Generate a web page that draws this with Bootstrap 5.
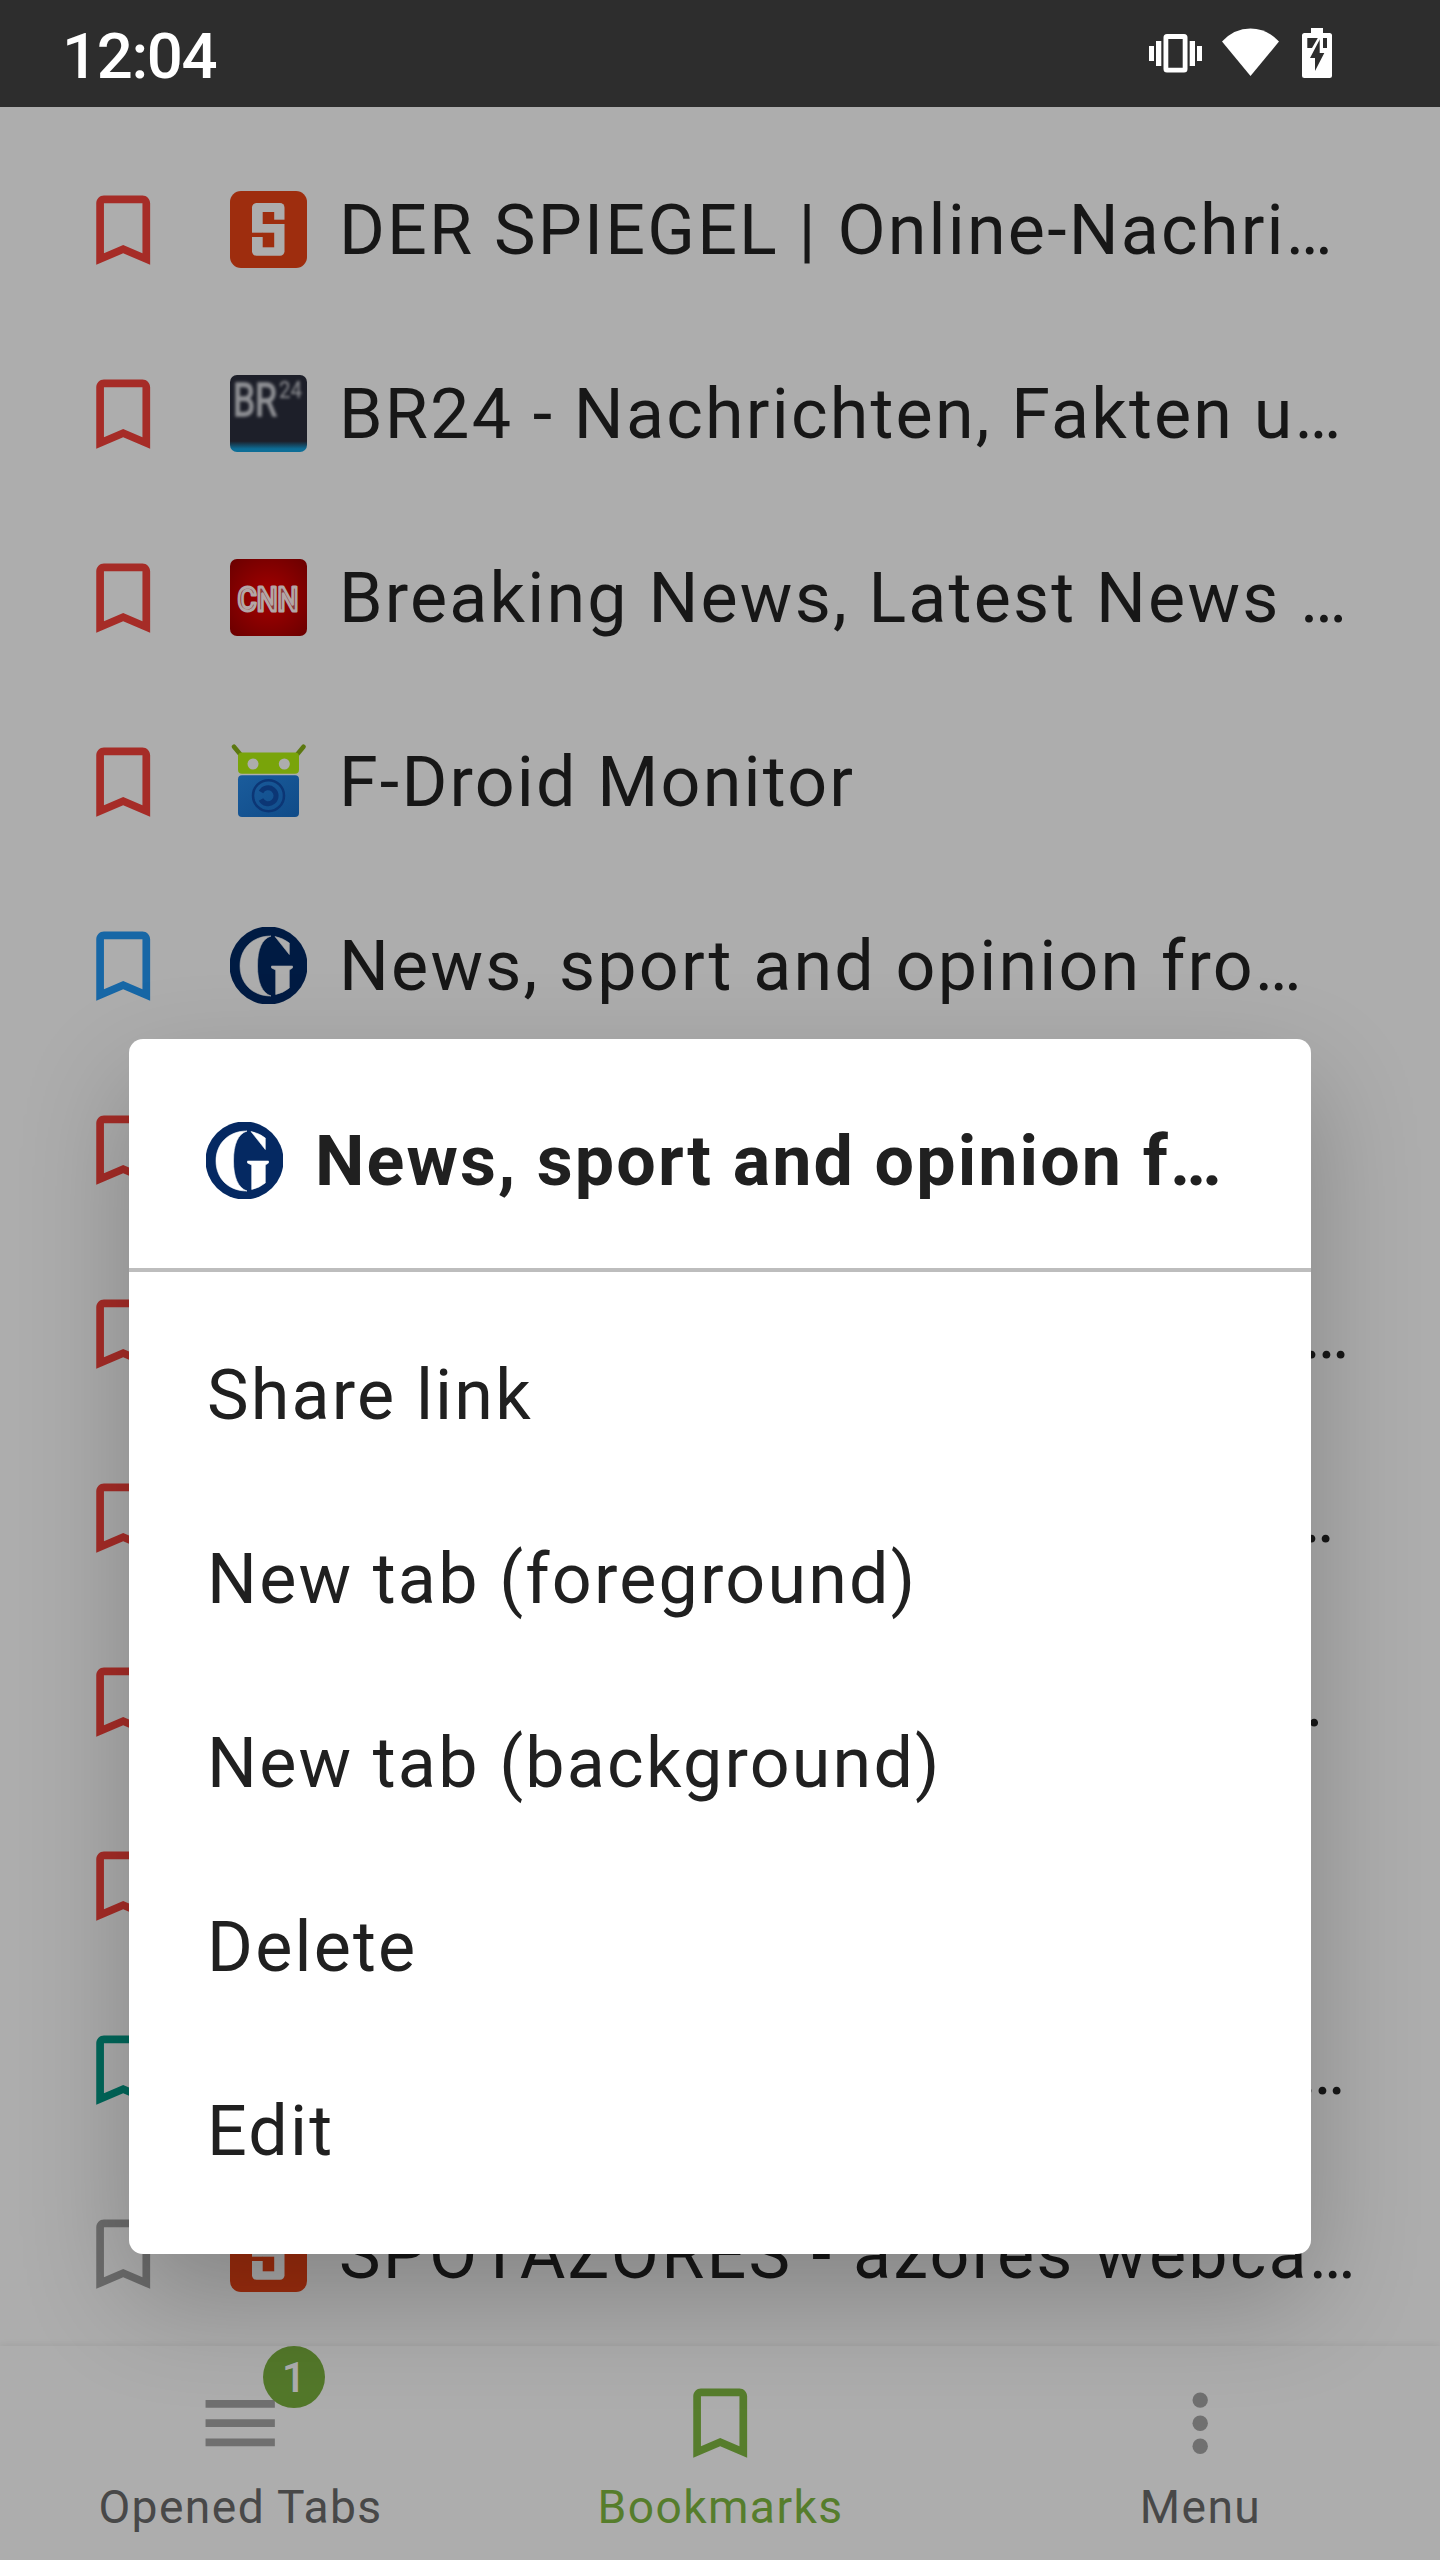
<!DOCTYPE html>
<html lang="de">
<head>
<meta charset="utf-8">
<meta name="viewport" content="width=device-width, initial-scale=1">
<title>Bookmarks</title>
<link href="https://cdn.jsdelivr.net/npm/bootstrap@5.3.0/dist/css/bootstrap.min.css" rel="stylesheet">
<style>
  body { font-family: Roboto, "Liberation Sans", sans-serif; background: #adadad; }
  .screen { width: 1440px; height: 2560px; }
  .statusbar { height: 107px; background: #2d2d2d; padding: 0 108px 0 62px; flex: none; }
  .clock { font-size: 63.5px; font-weight: 500; line-height: 107px; letter-spacing: -1.4px; padding-top: 3px; height: 107px; }
  .status-icons { margin-top: 20px; }
  .marks { padding-top: 30.5px; height: 2239px; flex: none; }
  .mark-row { height: 184px; padding: 0 77px; }
  .glyph { width: 92.4px; height: 92.4px; flex: none; fill: currentColor; }
  .mark-row .glyph { margin-top: 1.6px; }
  .fav { width: 77px; height: 77px; flex: none; overflow: visible; }
  .mark-row .fav { margin-left: 60.6px; }
  .entry { font-size: 70px; line-height: 92px; letter-spacing: 2.19px; color: #171717; white-space: nowrap; }
  .mark-row .entry { margin-left: 32px; }
  .red { color: #a62c27; } .blue { color: #1767a6; } .teal { color: #00685b; } .gray { color: #6c6c6c; }
  .bottomnav { height: 214px; flex: none; background: #adadad; color: #707070; box-shadow: 0 -1px 7px rgba(0,0,0,.07); }
  .bottomnav .glyph { margin-top: 31px; }
  .tab-label { font-size: 46.2px; line-height: 60px; letter-spacing: 1.4px; margin-top: 7.500px; padding-left: 1px; color: #484848; }
  .green, .green .tab-label { color: #567d2c; }
  .count { left: 263px; top: 0; width: 62px; height: 62px; background: #53782a; color: #adadad; font-size: 43px; font-weight: 500; line-height: 62px; }
  .sheet { left: 129px; top: 1039px; width: 1182px; height: 1215px; border-radius: 14px; box-shadow: 0 45px 110px rgba(0,0,0,.23); }
  .sheet-head { height: 233px; padding: 14px 77px 0; border-bottom: 4px solid #bdbdbd; }
  .sheet-head .entry { font-weight: 700; margin-left: 32px; letter-spacing: 2.100px; color: #202020; }
  .sheet-body { padding: 30.5px 77px 0 78px; }
  .sheet-body .entry { height: 184px; color: #202020; }
</style>
</head>
<body>
<svg width="0" height="0" class="position-absolute">
  <defs>
    <symbol id="mark-icon" viewBox="0 0 24 24"><path d="M17 3H7C5.900 3 5 3.900 5 5V21L12 18L19 21V5C19 3.900 18.100 3 17 3ZM17 18L12 15.820L7 18V5H17Z"/></symbol>
    <symbol id="spiegel" viewBox="0 0 77 77">
      <rect width="77" height="77" rx="11" fill="#9e2d0e"/>
      <rect x="22" y="12" width="32.500" height="52.700" rx="4.500" fill="#adadad"/>
      <g fill="#9e2d0e"><rect x="32.700" y="21" width="11.500" height="12"/><rect x="44" y="28.700" width="11" height="4.300"/><rect x="32.700" y="41.700" width="11.500" height="14.600"/><rect x="21.500" y="41.700" width="11.500" height="4.300"/></g>
    </symbol>
    <symbol id="guardian" viewBox="0 0 77 77">
      <circle cx="38.500" cy="38.500" r="39" fill="var(--disc)"/>
      <g fill="var(--paper)" stroke="var(--paper)" stroke-width=".6">
        <path d="M41 9C22 9 10 22 10 39C10 56 22 69 41 69C32 66 27.500 55 27.500 39C27.500 22 32 12 41 9Z"/>
        <path d="M45 9.500Q53 11 59.300 16V27.500Z"/>
        <path d="M41.500 39H62.500V41L59.300 43V61Q53 66 45.700 67.500V43L41.500 41Z"/>
      </g>
    </symbol>
    <radialGradient id="cnn-bg" cx=".5" cy=".5" r=".68"><stop offset="0" stop-color="#a60000"/><stop offset="1" stop-color="#6c0000"/></radialGradient>
    <linearGradient id="br-bg" x2="0" y2="1"><stop offset=".86" stop-color="#1d1f29"/><stop offset=".96" stop-color="#0d6d96"/></linearGradient>
    <linearGradient id="fd-bg" x2="1" y2="1"><stop offset="0" stop-color="#1a5c9c"/><stop offset="1" stop-color="#104b88"/></linearGradient>
    <filter id="soft"><feGaussianBlur stdDeviation="1.500"/></filter>
  </defs>
</svg>

<div class="screen position-relative d-flex flex-column overflow-hidden">
  <header class="statusbar d-flex justify-content-between text-white">
    <div class="clock">12:04</div>
    <svg class="status-icons" width="183" height="60" viewBox="1149 20 183 60" fill="#fff">
      <path fill-rule="evenodd" d="M1167 34H1184Q1187.500 34 1187.500 37.500V69Q1187.500 72.500 1184 72.500H1167Q1163.500 72.500 1163.500 69V37.500Q1163.500 34 1167 34ZM1168.300 39V67.700H1182.700V39Z"/>
      <path d="M1149 46h5v15h-5zM1156 41h5.300v25h-5.300zM1189.700 41h5.300v25h-5.300zM1197 46h5v15h-5z"/>
      <path d="M1222 41.500Q1234 28.500 1250.500 28.500T1279 41.500L1250.500 76Z"/>
      <path fill-rule="evenodd" d="M1311 28H1323V33H1329.500Q1332 33 1332 35.500V75.500Q1332 78 1329.500 78H1304.500Q1302 78 1302 75.500V35.500Q1302 33 1304.500 33H1311ZM1307.300 38V48H1312L1317.800 38ZM1323 38V48H1327V38ZM1320 39L1310 58H1315V71L1324.300 53H1319.700V39Z"/>
    </svg>
  </header>

  <main class="marks">
    <div class="mark-row d-flex align-items-center"><svg class="glyph red"><use href="#mark-icon"/></svg><svg class="fav"><use href="#spiegel"/></svg><div class="entry">DER SPIEGEL | Online-Nachri…</div></div>
    <div class="mark-row d-flex align-items-center"><svg class="glyph red"><use href="#mark-icon"/></svg>
      <svg class="fav" viewBox="0 0 77 77"><rect width="77" height="77" rx="7" fill="url(#br-bg)"/><g fill="#8f9094" stroke="#8f9094" filter="url(#soft)" font-family="Roboto"><text x="3" y="41" font-size="47" stroke-width="1.500" textLength="44" lengthAdjust="spacingAndGlyphs">BR</text><text x="49" y="23" font-size="23" stroke="none" textLength="23" lengthAdjust="spacingAndGlyphs">24</text></g></svg>
      <div class="entry">BR24 - Nachrichten, Fakten u…</div></div>
    <div class="mark-row d-flex align-items-center"><svg class="glyph red"><use href="#mark-icon"/></svg>
      <svg class="fav" viewBox="0 0 77 77"><rect width="77" height="77" rx="7" fill="url(#cnn-bg)"/><text x="7.500" y="51.500" font-family="Roboto" font-size="34" font-weight="500" stroke-linejoin="round" fill="#8c3c3c" stroke="#b3a6a6" stroke-width="3" textLength="61" lengthAdjust="spacingAndGlyphs">CNN</text></svg>
      <div class="entry">Breaking News, Latest News …</div></div>
    <div class="mark-row d-flex align-items-center"><svg class="glyph red"><use href="#mark-icon"/></svg>
      <svg class="fav" viewBox="0 0 77 77"><path d="M4 3.700L10 11M73.500 3.700L67.500 11" stroke="#5c7810" stroke-width="4.500" stroke-linecap="round"/><rect x="8" y="9.500" width="61" height="21.200" rx="4" fill="#79a40a"/><circle cx="23" cy="21" r="5.500" fill="#adadad"/><circle cx="54.300" cy="21" r="5.500" fill="#adadad"/><rect x="8" y="32.300" width="61" height="41.700" rx="4" fill="url(#fd-bg)"/><g fill="none" stroke="#0c3675"><circle cx="38.500" cy="52.700" r="15.500" stroke-width="2.500"/><path d="M31 49A8 8 0 1 1 31 56.500" stroke-width="5"/></g></svg>
      <div class="entry">F-Droid Monitor</div></div>
    <div class="mark-row d-flex align-items-center"><svg class="glyph blue"><use href="#mark-icon"/></svg><svg class="fav" style="--disc:#001b43;--paper:#adadad"><use href="#guardian"/></svg><div class="entry">News, sport and opinion fro…</div></div>
    <div class="mark-row d-flex align-items-center"><svg class="glyph red"><use href="#mark-icon"/></svg></div>
    <div class="mark-row d-flex align-items-center justify-content-between"><svg class="glyph red"><use href="#mark-icon"/></svg><div class="entry" style="margin-right:11.5px">…</div></div>
    <div class="mark-row d-flex align-items-center justify-content-between"><svg class="glyph red"><use href="#mark-icon"/></svg><div class="entry" style="margin-right:26.5px">…</div></div>
    <div class="mark-row d-flex align-items-center justify-content-between"><svg class="glyph red"><use href="#mark-icon"/></svg><div class="entry" style="margin-right:38px">…</div></div>
    <div class="mark-row d-flex align-items-center"><svg class="glyph red"><use href="#mark-icon"/></svg></div>
    <div class="mark-row d-flex align-items-center justify-content-between"><svg class="glyph teal"><use href="#mark-icon"/></svg><div class="entry" style="margin-right:15.5px">…</div></div>
    <div class="mark-row d-flex align-items-center"><svg class="glyph gray"><use href="#mark-icon"/></svg><svg class="fav"><use href="#spiegel"/></svg><div class="entry">SPOTAZORES - azores webca…</div></div>
  </main>

  <nav class="bottomnav row g-0 text-center position-relative">
    <div class="col-4"><svg class="glyph d-block mx-auto" viewBox="0 0 24 24"><path d="M3 18h18v-2H3v2zm0-5h18v-2H3v2zm0-7v2h18V6H3z"/></svg><div class="tab-label">Opened Tabs</div><div class="count position-absolute rounded-circle">1</div></div>
    <div class="col-4 green"><svg class="glyph d-block mx-auto"><use href="#mark-icon"/></svg><div class="tab-label">Bookmarks</div></div>
    <div class="col-4"><svg class="glyph d-block mx-auto" viewBox="0 0 24 24"><circle cx="12" cy="6" r="2"/><circle cx="12" cy="12" r="2"/><circle cx="12" cy="18" r="2"/></svg><div class="tab-label">Menu</div></div>
  </nav>

  <section class="sheet position-absolute bg-white">
    <div class="sheet-head d-flex align-items-center"><svg class="fav" style="--disc:#052962;--paper:#fff"><use href="#guardian"/></svg><div class="entry">News, sport and opinion f…</div></div>
    <div class="sheet-body">
      <div class="entry d-flex align-items-center">Share link</div>
      <div class="entry d-flex align-items-center">New tab (foreground)</div>
      <div class="entry d-flex align-items-center">New tab (background)</div>
      <div class="entry d-flex align-items-center">Delete</div>
      <div class="entry d-flex align-items-center">Edit</div>
    </div>
  </section>
</div>
<script src="https://cdn.jsdelivr.net/npm/bootstrap@5.3.0/dist/js/bootstrap.bundle.min.js"></script>
</body>
</html>
